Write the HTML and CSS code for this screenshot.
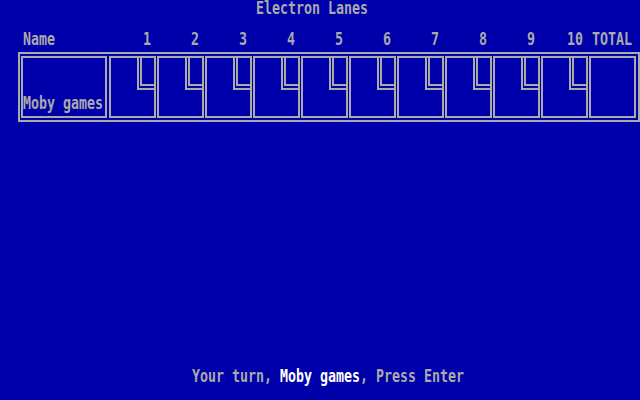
FILE: index.html
```html
<!DOCTYPE html>
<html>
<head>
<meta charset="utf-8">
<title>Electron Lanes</title>
<link rel="stylesheet" href="styles.css">
</head>
<body>
<div class="screen">
  <div class="title"><span class="t">Electron Lanes</span></div>
  <div class="header">
    <div class="hname"><span class="t">Name</span></div>
    <div class="hnum"><span class="t">1</span></div>
    <div class="hnum"><span class="t">2</span></div>
    <div class="hnum"><span class="t">3</span></div>
    <div class="hnum"><span class="t">4</span></div>
    <div class="hnum"><span class="t">5</span></div>
    <div class="hnum"><span class="t">6</span></div>
    <div class="hnum"><span class="t">7</span></div>
    <div class="hnum"><span class="t">8</span></div>
    <div class="hnum"><span class="t">9</span></div>
    <div class="hnum"><span class="t">10</span></div>
    <div class="htotal"><span class="t">TOTAL</span></div>
  </div>
  <div class="board">
    <div class="namecell"><span class="t">Moby games</span></div>
    <svg class="frame" viewBox="0 0 47 62" width="47" height="62"><rect x="0" y="0" width="47" height="2"/><rect x="0" y="60" width="47" height="2"/><rect x="0" y="0" width="2" height="62"/><rect x="45" y="0" width="2" height="62"/><rect x="28" y="0" width="2" height="34"/><rect x="28" y="32" width="19" height="2"/><rect x="31" y="0" width="2" height="30"/><rect x="31" y="28" width="16" height="2"/></svg>
    <svg class="frame" viewBox="0 0 47 62" width="47" height="62"><rect x="0" y="0" width="47" height="2"/><rect x="0" y="60" width="47" height="2"/><rect x="0" y="0" width="2" height="62"/><rect x="45" y="0" width="2" height="62"/><rect x="28" y="0" width="2" height="34"/><rect x="28" y="32" width="19" height="2"/><rect x="31" y="0" width="2" height="30"/><rect x="31" y="28" width="16" height="2"/></svg>
    <svg class="frame" viewBox="0 0 47 62" width="47" height="62"><rect x="0" y="0" width="47" height="2"/><rect x="0" y="60" width="47" height="2"/><rect x="0" y="0" width="2" height="62"/><rect x="45" y="0" width="2" height="62"/><rect x="28" y="0" width="2" height="34"/><rect x="28" y="32" width="19" height="2"/><rect x="31" y="0" width="2" height="30"/><rect x="31" y="28" width="16" height="2"/></svg>
    <svg class="frame" viewBox="0 0 47 62" width="47" height="62"><rect x="0" y="0" width="47" height="2"/><rect x="0" y="60" width="47" height="2"/><rect x="0" y="0" width="2" height="62"/><rect x="45" y="0" width="2" height="62"/><rect x="28" y="0" width="2" height="34"/><rect x="28" y="32" width="19" height="2"/><rect x="31" y="0" width="2" height="30"/><rect x="31" y="28" width="16" height="2"/></svg>
    <svg class="frame" viewBox="0 0 47 62" width="47" height="62"><rect x="0" y="0" width="47" height="2"/><rect x="0" y="60" width="47" height="2"/><rect x="0" y="0" width="2" height="62"/><rect x="45" y="0" width="2" height="62"/><rect x="28" y="0" width="2" height="34"/><rect x="28" y="32" width="19" height="2"/><rect x="31" y="0" width="2" height="30"/><rect x="31" y="28" width="16" height="2"/></svg>
    <svg class="frame" viewBox="0 0 47 62" width="47" height="62"><rect x="0" y="0" width="47" height="2"/><rect x="0" y="60" width="47" height="2"/><rect x="0" y="0" width="2" height="62"/><rect x="45" y="0" width="2" height="62"/><rect x="28" y="0" width="2" height="34"/><rect x="28" y="32" width="19" height="2"/><rect x="31" y="0" width="2" height="30"/><rect x="31" y="28" width="16" height="2"/></svg>
    <svg class="frame" viewBox="0 0 47 62" width="47" height="62"><rect x="0" y="0" width="47" height="2"/><rect x="0" y="60" width="47" height="2"/><rect x="0" y="0" width="2" height="62"/><rect x="45" y="0" width="2" height="62"/><rect x="28" y="0" width="2" height="34"/><rect x="28" y="32" width="19" height="2"/><rect x="31" y="0" width="2" height="30"/><rect x="31" y="28" width="16" height="2"/></svg>
    <svg class="frame" viewBox="0 0 47 62" width="47" height="62"><rect x="0" y="0" width="47" height="2"/><rect x="0" y="60" width="47" height="2"/><rect x="0" y="0" width="2" height="62"/><rect x="45" y="0" width="2" height="62"/><rect x="28" y="0" width="2" height="34"/><rect x="28" y="32" width="19" height="2"/><rect x="31" y="0" width="2" height="30"/><rect x="31" y="28" width="16" height="2"/></svg>
    <svg class="frame" viewBox="0 0 47 62" width="47" height="62"><rect x="0" y="0" width="47" height="2"/><rect x="0" y="60" width="47" height="2"/><rect x="0" y="0" width="2" height="62"/><rect x="45" y="0" width="2" height="62"/><rect x="28" y="0" width="2" height="34"/><rect x="28" y="32" width="19" height="2"/><rect x="31" y="0" width="2" height="30"/><rect x="31" y="28" width="16" height="2"/></svg>
    <svg class="frame" viewBox="0 0 47 62" width="47" height="62"><rect x="0" y="0" width="47" height="2"/><rect x="0" y="60" width="47" height="2"/><rect x="0" y="0" width="2" height="62"/><rect x="45" y="0" width="2" height="62"/><rect x="28" y="0" width="2" height="34"/><rect x="28" y="32" width="19" height="2"/><rect x="31" y="0" width="2" height="30"/><rect x="31" y="28" width="16" height="2"/></svg>
    <div class="totalcell"></div>
  </div>
  <div class="message"><span class="t">Your turn, <span class="hi">Moby games</span>, Press Enter</span></div>
</div>
</body>
</html>
```
FILE: styles.css
```css
html, body {
  margin: 0;
  padding: 0;
  background: #0000aa;
}

.screen {
  width: 640px;
  height: 400px;
  overflow: hidden;
  display: flex;
  flex-direction: column;
  background: #0000aa;
  color: #aaaaaa;
  font-family: "DejaVu Sans Mono", monospace;
  font-weight: bold;
  font-size: 13.29px;
  line-height: 16px;
  white-space: pre;
}

.t {
  display: inline-block;
  line-height: 10px;
  transform: scaleY(1.35);
  transform-origin: 50% 50%;
}

.hi {
  color: #ffffff;
}

.title {
  height: 16px;
  margin-top: 1px;
  padding-left: 256px;
}

.header {
  display: flex;
  gap: 1px;
  height: 16px;
  margin-top: 15px;
  margin-left: 21px;
}

.hname {
  width: 84px;
  margin-right: 1px;
  padding-left: 2px;
}

.hnum {
  width: 42px;
  padding-right: 5px;
  text-align: right;
}

.htotal {
  width: 43px;
  padding-right: 4px;
  text-align: right;
}

.board {
  display: flex;
  gap: 1px;
  width: 622px;
  height: 70px;
  box-sizing: border-box;
  margin-top: 4px;
  margin-left: 18px;
  border: 2px solid #aaaaaa;
  padding: 2px 1px;
}

.namecell {
  width: 86px;
  height: 62px;
  box-sizing: border-box;
  border: 2px solid #aaaaaa;
  margin-right: 1px;
  display: flex;
  align-items: flex-end;
  padding-bottom: 7px;
}

.frame {
  display: block;
  flex: none;
  fill: #aaaaaa;
  shape-rendering: crispEdges;
}

.totalcell {
  width: 47px;
  height: 62px;
  box-sizing: border-box;
  border: 2px solid #aaaaaa;
}

.message {
  height: 16px;
  margin-top: auto;
  margin-bottom: 15px;
  padding-left: 192px;
}
```
